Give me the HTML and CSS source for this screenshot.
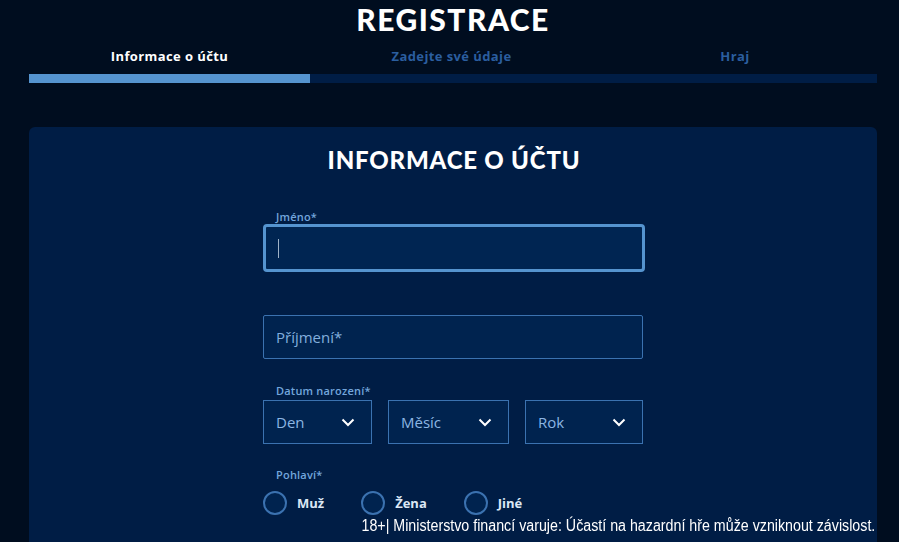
FILE: index.html
```html
<!DOCTYPE html>
<html lang="cs">
<head>
  <meta charset="UTF-8" />
  <meta name="viewport" content="width=device-width, initial-scale=1.0" />
  <title>Registrace</title>
  <link rel="stylesheet" href="styles.css">
</head>
<body>
  <div class="page">
    <h1>REGISTRACE</h1>

    <div class="steps">
      <div class="step active">
        <span>Informace o účtu</span>
        <div class="bar"></div>
      </div>
      <div class="step">
        <span>Zadejte své údaje</span>
        <div class="bar"></div>
      </div>
      <div class="step">
        <span>Hraj</span>
        <div class="bar"></div>
      </div>
    </div>

    <div class="card">
      <h2>INFORMACE O ÚČTU</h2>

      <form class="form">
        <label class="field-label" for="jmeno">Jméno*</label>
        <div class="input focused" id="jmeno"><span class="caret"></span></div>

        <div class="input second">Příjmení*</div>

        <div class="field-label date-label">Datum narození*</div>
        <div class="date-row">
          <div class="select">Den
            <svg width="14" height="9" viewBox="0 0 14 9"><polyline points="1.5,1.5 7,7 12.5,1.5" fill="none" stroke="#fff" stroke-width="2"/></svg>
          </div>
          <div class="select">Měsíc
            <svg width="14" height="9" viewBox="0 0 14 9"><polyline points="1.5,1.5 7,7 12.5,1.5" fill="none" stroke="#fff" stroke-width="2"/></svg>
          </div>
          <div class="select">Rok
            <svg width="14" height="9" viewBox="0 0 14 9"><polyline points="1.5,1.5 7,7 12.5,1.5" fill="none" stroke="#fff" stroke-width="2"/></svg>
          </div>
        </div>

        <div class="field-label gender-label">Pohlaví*</div>
        <div class="radios">
          <div class="radio"><span class="circle"></span>Muž</div>
          <div class="radio"><span class="circle"></span>Žena</div>
          <div class="radio"><span class="circle"></span>Jiné</div>
        </div>
      </form>
    </div>
  </div>

  <p class="warning">18+| Ministerstvo financí varuje: Účastí na hazardní hře může vzniknout závislost.</p>
</body>
</html>
```

FILE: styles.css
```css
body {
  font-family: 'Open Sans', 'Lato', sans-serif;
  margin: 0;
  padding: 0;
  background-color: #000d1f;
  color: white;
  overflow: hidden;
  height: 542px;
}
.page {
  width: 848px;
  margin-left: 29px;
}
h1 {
  margin: 0;
  padding-top: 2px;
  text-align: center;
  font-family: 'Lato', sans-serif;
  font-size: 30px;
  font-weight: 900;
  line-height: 34px;
  letter-spacing: 1.5px;
}
.steps {
  display: grid;
  grid-template-columns: 281px 283px 284px;
  margin-top: 9px;
}
.step {
  display: flex;
  flex-direction: column;
  align-items: center;
}
.step span {
  font-size: 13px;
  font-weight: 700;
  color: #2b5e9f;
  line-height: 16px;
  height: 29px;
  padding-top: 3px;
  box-sizing: border-box;
  letter-spacing: 0.4px;
}
.step.active span {
  color: #fff;
}
.step .bar {
  width: 100%;
  height: 9px;
  background-color: #001d45;
  border-right: 1px solid #000d1f;
}
.step.active .bar {
  background-color: #5594cf;
}
.step:last-child .bar {
  border-right: none;
}
.card {
  box-sizing: border-box;
  margin-top: 44px;
  background-color: #001d45;
  border-radius: 6px 6px 0 0;
  height: 415px;
  padding-top: 18px;
  padding-left: 2px;
}
h2 {
  margin: 0;
  text-align: center;
  font-family: 'Lato', sans-serif;
  font-size: 24px;
  font-weight: 900;
  line-height: 30px;
  letter-spacing: 0.8px;
}
.form {
  width: 382px;
  margin: 0 auto;
  padding-top: 34px;
}
.field-label {
  display: block;
  padding-left: 13px;
  font-size: 11px;
  font-weight: 600;
  color: #73a6dc;
  line-height: 15px;
  height: 15px;
  letter-spacing: 0.2px;
}
.input {
  box-sizing: border-box;
  height: 44px;
  border: 1px solid #3b72b0;
  background-color: #00234f;
  border-radius: 2px;
  padding-left: 12px;
  display: flex;
  align-items: center;
  font-size: 15px;
  color: #82aedd;
}
.input.focused {
  height: 48px;
  border: 3px solid #5594cf;
  border-radius: 4px;
  background-color: #002552;
}
.caret {
  display: inline-block;
  width: 1px;
  height: 19px;
  background-color: #9fb3c8;
}
.input.second {
  width: 380px;
  margin-top: 43px;
}
.date-label {
  margin-top: 24px;
}
.date-row {
  display: grid;
  grid-template-columns: 109px 121px 118px;
  gap: 16px;
  margin-top: 2px;
}
.select {
  box-sizing: border-box;
  height: 44px;
  border: 1px solid #3b72b0;
  background-color: #00234f;
  padding: 0 16px 0 12px;
  display: flex;
  align-items: center;
  justify-content: space-between;
  font-size: 15px;
  color: #8cb6e3;
}
.gender-label {
  margin-top: 23px;
}
.radios {
  display: flex;
  gap: 37px;
  margin-top: 9px;
}
.radio {
  display: flex;
  align-items: center;
  gap: 10px;
  font-size: 13px;
  font-weight: 700;
  color: #dbe7f5;
}
.circle {
  box-sizing: border-box;
  width: 24px;
  height: 24px;
  border: 2px solid #3b72b0;
  border-radius: 50%;
  background-color: #00234f;
}
.warning {
  position: fixed;
  right: 24px;
  bottom: 7px;
  margin: 0;
  font-family: 'Liberation Sans', Arial, sans-serif;
  font-size: 16px;
  color: #fff;
  transform: scaleX(0.89);
  transform-origin: right center;
  white-space: nowrap;
}
```
